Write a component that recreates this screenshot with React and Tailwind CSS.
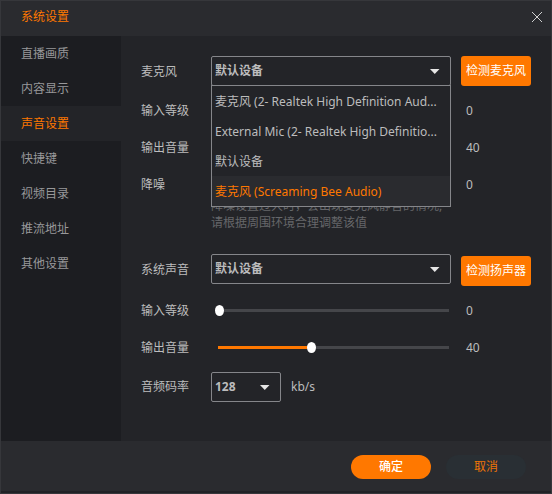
import React, { useState } from "react";

const menuItems = ["直播画质", "内容显示", "声音设置", "快捷键", "视频目录", "推流地址", "其他设置"];

const microphones = [
  "麦克风 (2- Realtek High Definition Aud...",
  "External Mic (2- Realtek High Definitio...",
  "默认设备",
  "麦克风 (Screaming Bee Audio)",
];

const Select = ({ id, value, options, onChange, onMouseDown }) => (
  <div className="relative">
    <select
      id={id}
      value={value}
      onChange={onChange}
      onMouseDown={onMouseDown}
      className="block w-full h-[30px] pl-[3px] pr-6 appearance-none rounded-[2px] border border-[#85868a] bg-[#232428] text-xs font-bold text-[#bcbcbd] outline-none"
    >
      {options.map((option) => (
        <option key={option}>{option}</option>
      ))}
    </select>
    <svg
      className="absolute right-[11px] top-[13px] pointer-events-none"
      width="10"
      height="5"
      viewBox="0 0 10 5"
      fill="#e6e6e6"
    >
      <path d="M0 0h9.5L4.75 5z" />
    </svg>
  </div>
);

const SliderRow = ({ id, label, initial }) => {
  const [value, setValue] = useState(initial);

  return (
    <div className="flex items-center h-[25px]">
      <label htmlFor={id} className="w-[70px] shrink-0">
        {label}
      </label>
      <div className="flex flex-1 min-w-0 pl-1">
        <input
          id={id}
          type="range"
          min="0"
          max="100"
          value={value}
          onChange={(e) => setValue(Number(e.target.value))}
          className="flex-1 min-w-0 -mr-[3px] h-[11px] appearance-none bg-no-repeat bg-size-[calc(100%-8px)_3px] bg-position-[3px_center] outline-none [&::-webkit-slider-thumb]:appearance-none [&::-webkit-slider-thumb]:w-[9px] [&::-webkit-slider-thumb]:h-[11px] [&::-webkit-slider-thumb]:rounded-[50%] [&::-webkit-slider-thumb]:bg-white"
          style={{
            backgroundImage: `linear-gradient(to right, #ff7800 ${value}%, #45464a ${value}%)`,
          }}
        />
      </div>
      <output htmlFor={id} className="w-[80px] shrink-0 pl-[15px]">
        {value}
      </output>
    </div>
  );
};

const TestButton = ({ children }) => (
  <button className="w-[70px] h-[30px] ml-[10px] shrink-0 rounded-[3px] bg-[#ff7800] text-xs text-white">
    {children}
  </button>
);

const App = () => {
  const [page, setPage] = useState("声音设置");
  const [mic, setMic] = useState("默认设备");
  const [micOpen, setMicOpen] = useState(true);

  const pickMic = (name) => {
    setMic(name);
    setMicOpen(false);
  };

  return (
    <div className="flex flex-col min-h-screen border border-[#36373b] bg-[#232428] font-['Noto_Sans','Noto_Sans_CJK_SC',sans-serif] text-xs text-[#bcbcbd]">
      <header className="flex items-center justify-between h-[35px] pl-5 pr-[9px] pb-1 bg-[#2a2b2f]">
        <h1 className="text-[#ff7800]">系统设置</h1>
        <button aria-label="关闭">
          <svg width="10" height="10" viewBox="0 0 10 10" stroke="#d0d0d0" strokeWidth="1">
            <path d="M0 0l10 10M10 0L0 10" />
          </svg>
        </button>
      </header>

      <div className="flex flex-1">
        <nav className="w-[120px] shrink-0 bg-[#1c1d21]">
          {menuItems.map((item) => (
            <a
              key={item}
              href="#"
              onClick={() => setPage(item)}
              className={`flex items-center h-[35px] pl-5 ${
                item === page ? "bg-[#232428] text-[#ff7800]" : "text-[#98989a]"
              }`}
            >
              {item}
            </a>
          ))}
        </nav>

        <main className="flex flex-col flex-1 min-w-0 gap-[23px] px-5 pt-5 pb-9">
          <section className="flex flex-col">
            <div className="flex flex-col gap-3">
              <div className="flex h-[30px]">
                <label htmlFor="mic" className="w-[70px] shrink-0 leading-8">
                  麦克风
                </label>
                <div className="relative flex-1 min-w-0">
                  <Select
                    id="mic"
                    value={mic}
                    options={microphones}
                    onChange={(e) => setMic(e.target.value)}
                    onMouseDown={(e) => {
                      e.preventDefault();
                      setMicOpen(!micOpen);
                    }}
                  />
                  {micOpen && (
                    <ul
                      role="listbox"
                      className="absolute z-10 top-[29px] left-0 w-full border border-[#85868a] bg-[#232428]"
                    >
                      {microphones.map((name, i) => (
                        <li
                          key={name}
                          role="option"
                          aria-selected={name === mic}
                          onClick={() => pickMic(name)}
                          className={`h-[30px] pl-[3px] leading-8 whitespace-nowrap overflow-hidden ${
                            i === 3 ? "bg-[#2a2b2f] text-[#ff7800]" : ""
                          }`}
                        >
                          {name}
                        </li>
                      ))}
                    </ul>
                  )}
                </div>
                <TestButton>检测麦克风</TestButton>
              </div>
              <SliderRow id="mic-level" label="输入等级" initial={0} />
              <SliderRow id="mic-volume" label="输出音量" initial={40} />
              <SliderRow id="noise" label="降噪" initial={0} />
            </div>
            <p className="pl-[70px] leading-[17px] text-[#66676a]">
              降噪设置过大时，会出现麦克风静音的情况,
              <br />
              请根据周围环境合理调整该值
            </p>
          </section>

          <section className="flex flex-col gap-3">
            <div className="flex h-8">
              <label htmlFor="speaker" className="w-[70px] shrink-0 leading-8">
                系统声音
              </label>
              <div className="flex-1 min-w-0">
                <Select id="speaker" options={["默认设备"]} />
              </div>
              <div className="self-end flex">
                <TestButton>检测扬声器</TestButton>
              </div>
            </div>
            <SliderRow id="speaker-level" label="输入等级" initial={0} />
            <SliderRow id="speaker-volume" label="输出音量" initial={40} />
            <div className="flex items-center">
              <label htmlFor="bitrate" className="w-[70px] shrink-0">
                音频码率
              </label>
              <div className="w-[70px]">
                <Select id="bitrate" options={["128", "192", "256"]} />
              </div>
              <span className="pl-[10px]">kb/s</span>
            </div>
          </section>
        </main>
      </div>

      <footer className="flex justify-end gap-[15px] pt-[14px] pb-3 pr-[25px] border-b-2 border-[#212226] bg-[#2a2b2f]">
        <button className="w-20 h-6 rounded-full bg-[#ff7800] font-medium text-white">确定</button>
        <button className="w-20 h-6 rounded-full bg-[#292f34] text-[#ee7407]">取消</button>
      </footer>
    </div>
  );
};

export default App;
